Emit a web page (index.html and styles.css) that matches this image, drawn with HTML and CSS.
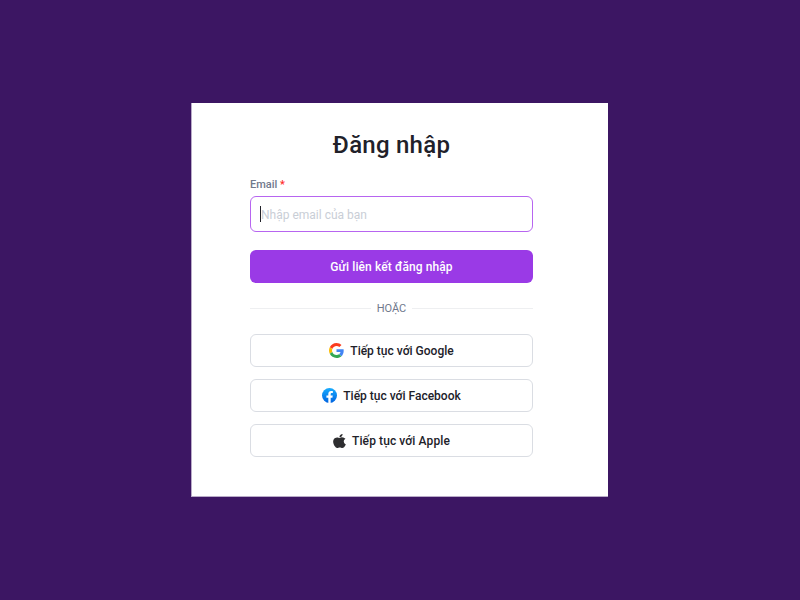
FILE: index.html
```
<!DOCTYPE html>
<html lang="vi">
<head>
    <meta charset="UTF-8">
    <meta name="viewport" content="width=device-width, initial-scale=1.0">
    <title>Đăng nhập</title>
    <link rel="stylesheet" href="styles.css">
</head>
<body>
    <main class="login-card">
        <h1>Đăng nhập</h1>

        <form class="login-form">
            <label for="email">Email <span class="required">*</span></label>
            <div class="input-wrap">
                <span class="caret"></span>
                <input type="email" id="email" name="email" placeholder="Nhập email của bạn" required>
            </div>
            <button class="btn btn-primary" type="submit">Gửi liên kết đăng nhập</button>
        </form>

        <div class="divider"><span>HOẶC</span></div>

        <div class="social">
            <button class="btn" type="button">
                <svg width="15" height="15" viewBox="0 0 48 48">
                    <path fill="#fb3c1f" d="M24 9.5c3.54 0 6.71 1.22 9.21 3.6l6.85-6.85C35.9 2.38 30.47 0 24 0 14.62 0 6.51 5.38 2.56 13.22l7.98 6.19C12.43 13.72 17.74 9.5 24 9.5z"/>
                    <path fill="#4285F4" d="M46.98 24.55c0-1.57-.15-3.09-.38-4.55H24v9.02h12.94c-.58 2.96-2.26 5.48-4.78 7.18l7.73 6c4.51-4.18 7.09-10.36 7.09-17.65z"/>
                    <path fill="#FBBC05" d="M10.53 28.59c-.48-1.45-.76-2.99-.76-4.59s.27-3.14.76-4.59l-7.98-6.19C.92 16.46 0 20.12 0 24s.92 7.54 2.56 10.78l7.97-6.19z"/>
                    <path fill="#34A853" d="M24 48c6.48 0 11.93-2.13 15.89-5.81l-7.73-6c-2.15 1.45-4.92 2.3-8.16 2.3-6.26 0-11.57-4.22-13.47-9.91l-7.98 6.19C6.51 42.62 14.62 48 24 48z"/>
                </svg>
                <span>Tiếp tục với Google</span>
            </button>
            <button class="btn" type="button">
                <svg width="15" height="15" viewBox="0 0 24 24">
                    <defs>
                        <linearGradient id="fb" x1="0" y1="0" x2="0" y2="1">
                            <stop offset="0" stop-color="#18acfe"/>
                            <stop offset="1" stop-color="#0163e0"/>
                        </linearGradient>
                    </defs>
                    <circle cx="12" cy="12" r="12" fill="url(#fb)"/>
                    <path fill="#fff" d="M16.67 15.47l.53-3.47h-3.33V9.75c0-.95.47-1.87 1.96-1.87h1.51V4.92s-1.37-.23-2.69-.23c-2.74 0-4.53 1.66-4.53 4.67V12H7.08v3.47h3.04v8.39a12.1 12.1 0 0 0 3.75 0v-8.39z"/>
                </svg>
                <span>Tiếp tục với Facebook</span>
            </button>
            <button class="btn btn-apple" type="button">
                <svg width="13" height="14" viewBox="2 0 20 24" preserveAspectRatio="none">
                    <path fill="#2e2e30" d="M12.15 6.9c-.95 0-2.42-1.08-3.96-1.04-2.04.03-3.91 1.18-4.96 3.01-2.12 3.68-.55 9.1 1.52 12.09 1.01 1.45 2.21 3.09 3.79 3.04 1.52-.07 2.09-.99 3.94-.99 1.83 0 2.35.99 3.96.95 1.64-.03 2.68-1.48 3.68-2.95 1.16-1.69 1.64-3.33 1.66-3.42-.04-.01-3.18-1.22-3.22-4.86-.03-3.04 2.48-4.49 2.6-4.56-1.43-2.09-3.62-2.32-4.39-2.38-2-.16-3.67 1.09-4.62 1.11zM15.53 3.83c.84-1.01 1.4-2.43 1.25-3.83-1.21.05-2.66.81-3.53 1.82-.78.9-1.45 2.34-1.27 3.71 1.34.1 2.71-.69 3.55-1.7z"/>
                </svg>
                <span>Tiếp tục với Apple</span>
            </button>
        </div>
    </main>
</body>
</html>
```
FILE: styles.css
```
* {
    box-sizing: border-box;
}

body {
    margin: 0;
    padding: 103px 0 0 191px;
    height: 600px;
    background-color: #3c1663;
    color: #212129;
    font-family: Roboto, "Noto Sans", sans-serif;
}

.login-card {
    width: 417px;
    height: 394px;
    padding: 24px 75px 0 58px;
    background-color: #ffffff;
    border-left: 1px solid #b9abc8;
    border-bottom: 1px solid #b9abc8;
}

h1 {
    margin: 0;
    height: 36px;
    line-height: 36px;
    font-size: 24px;
    font-weight: 500;
    letter-spacing: 0.25px;
    text-align: center;
}

.login-form {
    display: flex;
    flex-direction: column;
}

label {
    margin-top: 10px;
    height: 23px;
    line-height: 23px;
    font-size: 11px;
    font-weight: 500;
    color: #70798c;
}

.required {
    color: #ff2a2a;
}

.input-wrap {
    display: flex;
    align-items: center;
    height: 36px;
    padding-left: 9px;
    border: 1px solid #b765f0;
    border-radius: 6px;
}

.caret {
    width: 1px;
    height: 16px;
    background-color: #212129;
}

input {
    flex: 1;
    min-width: 0;
    padding: 2px 0 0;
    border: none;
    outline: none;
    background: none;
    font-family: inherit;
    font-size: 12px;
}

input::placeholder {
    color: #c9ced6;
}

.btn {
    display: flex;
    align-items: center;
    justify-content: center;
    gap: 6px;
    width: 283px;
    height: 33px;
    padding: 0;
    border: 1px solid #dadde3;
    border-radius: 6px;
    background-color: #ffffff;
    color: #212129;
    font-family: inherit;
    font-size: 12px;
    font-weight: 500;
    cursor: pointer;
}

.btn-primary {
    margin-top: 18px;
    border: none;
    background-color: #9a3ae6;
    color: #ffffff;
    letter-spacing: 0.1px;
}

.btn-apple {
    letter-spacing: 0.1px;
}

.divider {
    display: flex;
    align-items: center;
    gap: 6px;
    height: 51px;
    font-size: 11px;
    color: #70798c;
}

.divider::before,
.divider::after {
    content: "";
    flex: 1;
    height: 1px;
    background-color: #eeeff1;
}

.social {
    display: flex;
    flex-direction: column;
    gap: 12px;
}
```
